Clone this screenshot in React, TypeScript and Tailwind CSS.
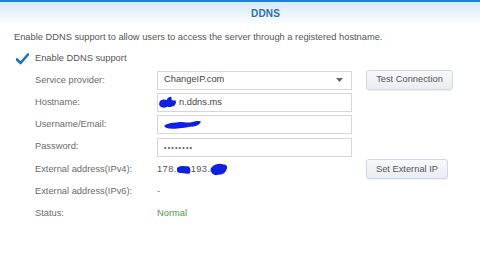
const font = { fontFamily: '"Liberation Sans", Arial, sans-serif' }

function Scribble({ w, h, d }: { w: number; h: number; d: string }) {
  return (
    <svg width={w} height={h} viewBox={`0 0 ${w} ${h}`} className="inline-block align-middle">
      <path d={d} fill="#1020e0" stroke="#1020e0" strokeWidth="1.5" strokeLinejoin="round" />
    </svg>
  )
}

function Row({ label, children, right }: { label: string; children: React.ReactNode; right?: React.ReactNode }) {
  return (
    <div className="flex items-center h-[22.3px]">
      <div className="w-[122px] shrink-0 text-[#6a6a6a]">{label}</div>
      <div className="w-[195px] shrink-0 flex items-center">{children}</div>
      {right && <div className="ml-[14px]">{right}</div>}
    </div>
  )
}

function Field({ children }: { children: React.ReactNode }) {
  return (
    <div className="w-full h-[19px] border border-[#d4d8dc] bg-white flex items-center px-[6px] text-[#444]">
      {children}
    </div>
  )
}

function Button({ children, w }: { children: React.ReactNode; w: string }) {
  return (
    <button
      className={`${w} h-[20px] rounded-[3px] border border-[#cfd6de] bg-gradient-to-b from-[#f7f9fb] to-[#e8edf2] text-[#555] text-[9.3px] shadow-[0_1px_1px_rgba(0,0,0,0.06)]`}
    >
      {children}
    </button>
  )
}

export default function App() {
  return (
    <div className="w-[480px] h-[274px] bg-white overflow-hidden text-[9.3px] leading-none" style={font}>
      {/* Header */}
      <div className="h-[2px] bg-[#1f7fd6]" />
      <div className="h-[24px] bg-gradient-to-b from-[#d6ebfb] to-white flex items-center pl-[251px]">
        <span className="font-bold text-[#2e6db8] text-[10px] tracking-[0.2px]">DDNS</span>
      </div>

      <div className="pl-[14px]">
        <p className="mt-[5px] text-[#555] h-[14px] flex items-center">
          Enable DDNS support to allow users to access the server through a registered hostname.
        </p>

        <div className="flex items-center h-[14px] mt-[7px] pl-[2px]">
          <svg width="13" height="12" viewBox="0 0 13 12">
            <path d="M1 6.5 L4.6 10 L12 1.5" fill="none" stroke="#1d6fc8" strokeWidth="2.6" strokeLinecap="round" strokeLinejoin="round" />
          </svg>
          <span className="ml-[6px] text-[#555]">Enable DDNS support</span>
        </div>

        <div className="pl-[21px] mt-[3px]">
          <Row label="Service provider:" right={<Button w="w-[87px]">Test Connection</Button>}>
            <Field>
              <span className="flex-1">ChangeIP.com</span>
              <svg width="7" height="4" viewBox="0 0 7 4" className="mr-[2px]">
                <path d="M0 0 H7 L3.5 4 Z" fill="#666" />
              </svg>
            </Field>
          </Row>
          <Row label="Hostname:">
            <Field>
              <span className="-ml-[6px] mr-[1px]">
                <Scribble w={20} h={14} d="M2 8 C3 5 6 5 9 6 C10 3 12 2 13 3 C12 5 14 7 17 6 C18 8 16 11 13 11 C11 12 9 10 7 12 C4 12 1 11 2 8 Z" />
              </span>
              <span>n.ddns.ms</span>
            </Field>
          </Row>
          <Row label="Username/Email:">
            <Field>
              <Scribble w={38} h={10} d="M1 6 C5 3 10 4 14 3 C18 2 22 4 27 3 C31 2 34 1 36 2 C34 5 30 6 26 6 C20 7 14 8 8 8 C5 8 2 8 1 6 Z" />
            </Field>
          </Row>
          <Row label="Password:">
            <Field>
              <span className="tracking-[1.2px] text-[#555] text-[7px]">••••••••</span>
            </Field>
          </Row>
          <Row label="External address(IPv4):" right={<Button w="w-[82px]">Set External IP</Button>}>
            <span className="text-[#555] tracking-[0.4px]">178.</span>
            <Scribble w={14} h={9} d="M1 3 C4 1 8 2 11 2 C13 3 13 6 12 8 C9 8 5 7 2 7 C0 6 0 4 1 3 Z" />
            <span className="text-[#555] tracking-[0.4px]">193.</span>
            <Scribble w={18} h={13} d="M2 5 C4 2 9 1 13 2 C16 2 17 4 16 6 C15 9 12 11 8 11 C5 12 3 11 2 9 C1 8 1 6 2 5 Z" />
          </Row>
          <Row label="External address(IPv6):">
            <span className="text-[#777]">-</span>
          </Row>
          <Row label="Status:">
            <span className="text-[#4a9a3a]">Normal</span>
          </Row>
        </div>
      </div>
    </div>
  )
}
